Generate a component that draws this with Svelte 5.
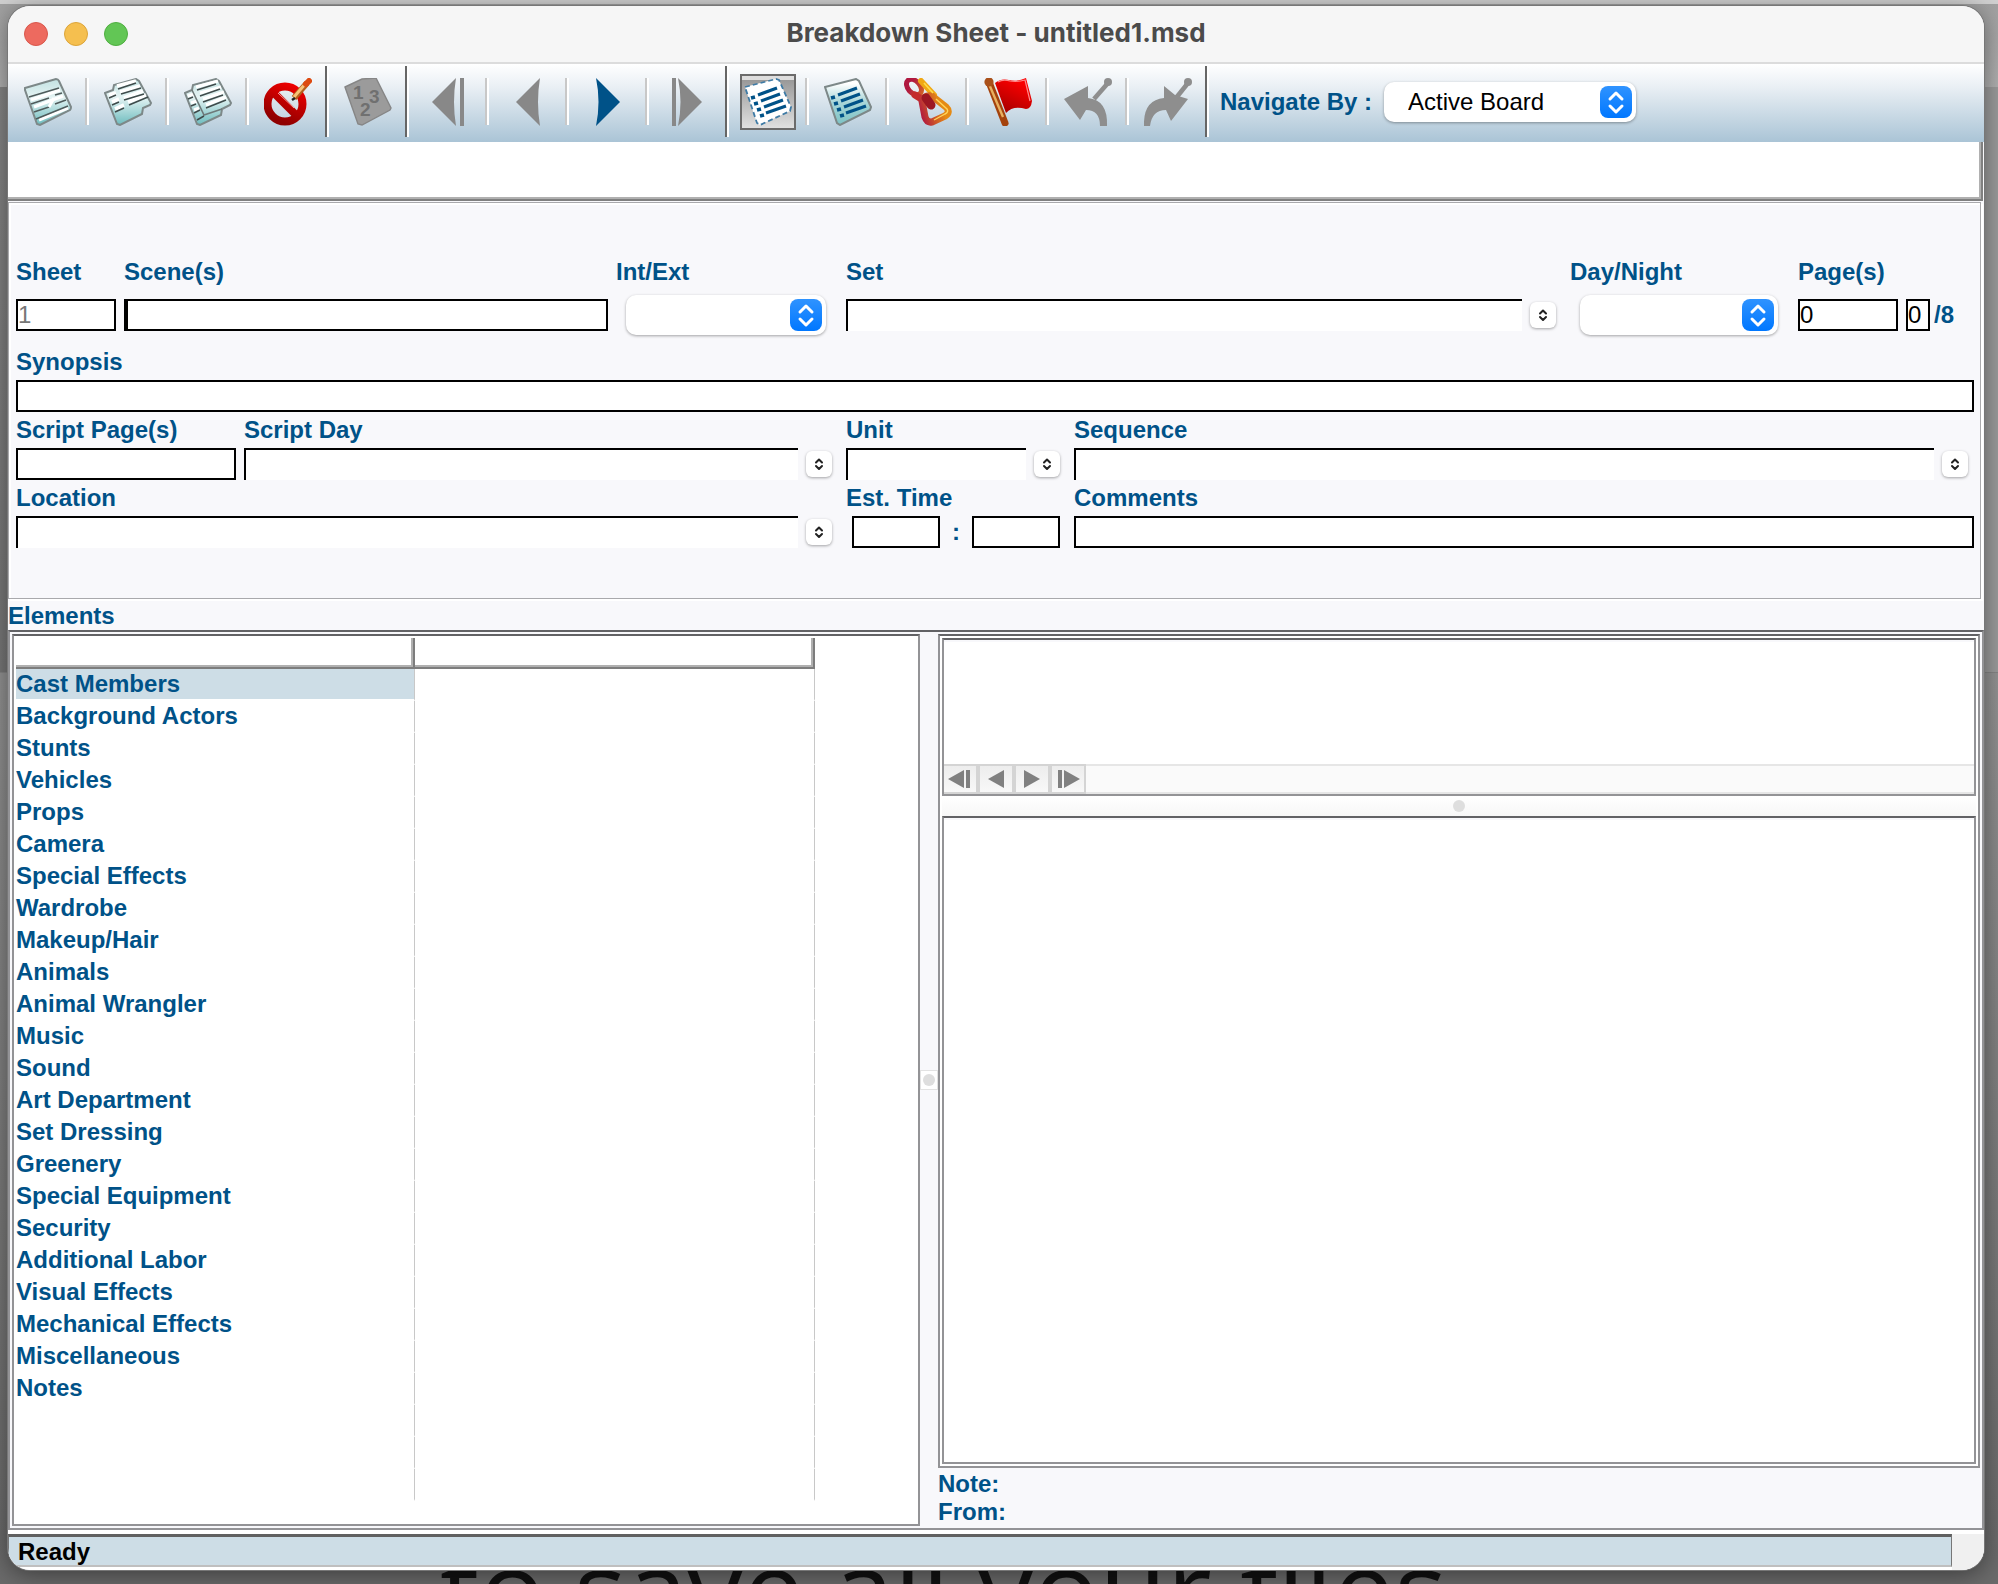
<script lang="ts">
  type Tool = { name: string; label: string; end?: boolean; disabled?: boolean; pressed?: boolean };

  const tools: Tool[] = [
    { name: 'sheet', label: 'New sheet' },
    { name: 'strips', label: 'Split sheet' },
    { name: 'merge', label: 'Merge sheets' },
    { name: 'omit', label: 'Omit sheet', end: true },
    { name: 'renumber', label: 'Renumber', disabled: true, end: true },
    { name: 'first', label: 'First sheet', disabled: true },
    { name: 'prev', label: 'Previous sheet', disabled: true },
    { name: 'next', label: 'Next sheet' },
    { name: 'last', label: 'Last sheet', disabled: true, end: true },
    { name: 'list', label: 'All elements', pressed: true },
    { name: 'used', label: 'Used elements' },
    { name: 'link', label: 'Link elements' },
    { name: 'flag', label: 'Flag sheet' },
    { name: 'undo', label: 'Previous mark', disabled: true },
    { name: 'redo', label: 'Next mark', disabled: true, end: true },
  ];

  const categories = [
    'Cast Members', 'Background Actors', 'Stunts', 'Vehicles', 'Props', 'Camera',
    'Special Effects', 'Wardrobe', 'Makeup/Hair', 'Animals', 'Animal Wrangler', 'Music',
    'Sound', 'Art Department', 'Set Dressing', 'Greenery', 'Special Equipment', 'Security',
    'Additional Labor', 'Visual Effects', 'Mechanical Effects', 'Miscellaneous', 'Notes',
    '', '', '',
  ];

  let selected = $state(0);
  let sheet = $state('1');
  let pages = $state('0');
  let eighths = $state('0');
</script>

{#snippet chevrons()}
  <svg viewBox="0 0 32 32" aria-hidden="true">
    <path d="M10 13 L16 7 L22 13 M10 20 L16 26 L22 20" />
  </svg>
{/snippet}

{#snippet combo(id: string)}
  <div class="combo">
    <input {id} type="text" />
    <button class="mini" aria-label="Show choices">{@render chevrons()}</button>
  </div>
{/snippet}

{#snippet listLines()}
  <path d="M14 17 L33 10 M17 23 L36 16 M20 29 L39 22 M22 35 L42 28" stroke="#005288" stroke-width="3.2" />
  <path d="M7 20 L11 19 M10 26 L14 25 M13 32 L17 31 M16 38 L20 37" stroke="#005288" stroke-width="3.6" />
{/snippet}

{#snippet icon(name: string)}
  <svg class="icon" viewBox="0 0 48 48" fill="none" aria-hidden="true">
    {#if name === 'sheet'}
      <path d="M1 10 L32 1 Q34 1 35 3 L47 29 Q47 31 46 32 L16 47 L13 46 L1 12 Z" fill="url(#paper)" stroke="#7d8888" stroke-width="2" />
      <path d="M7 22 L36 12 M10 29 L39 18 M15 42 L44 30" stroke="#fff" stroke-width="3" />
      <path d="M5 19 L35 10 M7 26 L25 20 M31 17 L38 15 M10 34 L25 29 M31 26 L42 22 M12 41 L44 28" stroke="#4f5b5b" stroke-width="1.5" />
      <path d="M25 29 L30 20" stroke="#fff" stroke-width="3" />
    {:else if name === 'strips'}
      <path d="M1 15 L9 12 L10 7 L32 1 L35 3 L47 25 L46 27 L39 30 L38 36 L16 47 L13 46 Z" fill="url(#paper)" stroke="#7d8888" stroke-width="2" />
      <path d="M13 8 L32 3 M5 17 L12 15 M16 14 L36 8 M8 24 L15 21 M20 20 L39 13 M11 31 L20 27 M24 24 L42 17" stroke="#fff" stroke-width="3.6" />
      <path d="M14 11 L32 5 M5 20 L12 17 M17 16 L37 10 M8 27 L15 24 M20 22 L40 16 M11 34 L20 30 M25 27 L44 19" stroke="#3f4b4b" stroke-width="1.5" />
    {:else if name === 'merge'}
      <path d="M1 15 L8 12 L9 7 L32 1 L35 3 L47 25 L46 27 L38 31 L37 37 L16 47 L13 46 Z" fill="url(#paper)" stroke="#7d8888" stroke-width="2" />
      <path d="M12 9 L34 3 M16 15 L37 9 M19 21 L40 14 M22 27 L42 19 M4 18 L10 16 M7 25 L13 23 M10 32 L15 30" stroke="#fff" stroke-width="3" />
      <path d="M8 12 L20 37 L38 31" stroke="#6d7979" stroke-width="1.6" />
      <path d="M13 12 L32 6 M16 18 L36 11 M19 24 L39 17 M22 30 L42 22 M4 21 L9 19 M7 28 L12 26 M10 35 L16 32 M13 42 L20 38" stroke="#3f4b4b" stroke-width="1.5" />
    {:else if name === 'omit'}
      <circle cx="21" cy="26" r="17.5" stroke="url(#red)" stroke-width="8" />
      <path d="M9 14 L33 38" stroke="url(#red)" stroke-width="8" />
      <path d="M14 15 L30 30" stroke="#f6a0a0" stroke-width="1" />
      <path d="M30 20 L43 5" stroke="#b5601c" stroke-width="6" />
      <path d="M30 19 L42 5" stroke="#f7c277" stroke-width="3" />
      <path d="M42 6 L45 3" stroke="#dd4a10" stroke-width="6" stroke-linecap="round" />
      <path d="M28 22 L31 20" stroke="#222" stroke-width="2.4" />
    {:else if name === 'renumber'}
      <path d="M1 9 L18 1 L32 0 L47 30 L46 32 L18 47 L14 46 Z" fill="#9b9b9b" stroke="#868686" stroke-width="1.4" />
      <g fill="#707070" font-family="Liberation Sans, Arial, sans-serif" font-size="19" font-weight="700">
        <text x="9" y="21">1</text>
        <text x="25" y="25">3</text>
        <text x="16" y="38">2</text>
      </g>
    {:else if name === 'first'}
      <path d="M8 24 L32 0 Q28 24 32 48 Z" fill="#888" />
      <path d="M36 0 H40 V48 H36 Z" fill="#888" />
    {:else if name === 'prev'}
      <path d="M12 24 L36 0 Q32 24 36 48 Z" fill="#888" />
    {:else if name === 'next'}
      <path d="M36 24 L12 0 Q17 24 12 48 Z" fill="#005288" />
    {:else if name === 'last'}
      <path d="M38 24 L14 0 Q19 24 14 48 Z" fill="#888" />
      <path d="M8 0 H12 V48 H8 Z" fill="#888" />
    {:else if name === 'list'}
      <path d="M1 9 L32 1 L35 2 L47 29 L46 33 L16 47 L13 45 Z" fill="#fff" stroke="#3f7ba5" stroke-width="1.8" stroke-dasharray="5 3" />
      {@render listLines()}
    {:else if name === 'used'}
      <path d="M1 9 L32 1 L35 3 L47 29 L46 32 L16 47 L13 45 Z" fill="url(#paperTeal)" stroke="#7d8888" stroke-width="2" />
      {@render listLines()}
    {:else if name === 'link'}
      <ellipse cx="10" cy="9" rx="9" ry="6" transform="rotate(48 10 9)" stroke="url(#chain)" stroke-width="5" />
      <path d="M17 3 L30 17" stroke="#f0a814" stroke-width="6" stroke-linecap="round" />
      <path d="M11 17 L24 25" stroke="#c42c2c" stroke-width="7" stroke-linecap="round" />
      <path d="M18 23 Q20 17 28 18 L42 29 Q47 34 41 38 L28 44 Q23 45 21 39 Z" stroke="url(#chain)" stroke-width="7" stroke-linejoin="round" />
      <path d="M22 20 L27 27" stroke="#9c1722" stroke-width="9" stroke-linecap="round" />
      <path d="M32 21 L43 31 Q45 34 41 36 L30 42" stroke="#ffd45a" stroke-width="1.4" />
      <path d="M20 5 L29 15" stroke="#ffdc4a" stroke-width="1.6" />
    {:else if name === 'flag'}
      <path d="M11 5 Q17 0 25 2 Q34 4 42 0 L48 23 Q47 31 42 31 Q29 27 22 35 Z" fill="url(#red)" />
      <path d="M14 4 Q19 1 26 3 Q34 4 41 2 L46 23" stroke="#ff8a8a" stroke-width="1.2" />
      <path d="M5 4 L21 45" stroke="#a4420c" stroke-width="7" stroke-linecap="round" />
      <path d="M5 6 L19 39" stroke="#e8b060" stroke-width="2.4" />
      <circle cx="5" cy="4" r="4.6" fill="#a9501a" />
    {:else if name === 'undo'}
      <path d="M0 21 L24 8 V20 Q44 22 43 48 H36 Q36 32 22 32 L16 42 Z" fill="#8e8e8e" />
      <path d="M30 21 L44 5" stroke="#8e8e8e" stroke-width="4.6" />
      <circle cx="44" cy="4" r="4" fill="#8e8e8e" />
    {:else if name === 'redo'}
      <path d="M20 8 L31 17 L44 21 L27 43 L22 32 Q8 32 6 48 H0 Q-1 22 20 20 Z" fill="#8e8e8e" />
      <path d="M32 20 L44 5" stroke="#8e8e8e" stroke-width="4.6" />
      <circle cx="44" cy="4" r="4" fill="#8e8e8e" />
    {/if}
  </svg>
{/snippet}

<svg class="defs" aria-hidden="true">
  <defs>
    <linearGradient id="paper" x1="0" y1="0" x2="0" y2="1">
      <stop offset="0" stop-color="#c3e2e2" />
      <stop offset="0.4" stop-color="#e4f3f3" />
      <stop offset="1" stop-color="#6dbcbe" />
    </linearGradient>
    <linearGradient id="paperTeal" x1="0" y1="0" x2="0" y2="1">
      <stop offset="0.1" stop-color="#fff" />
      <stop offset="0.5" stop-color="#a9d6d8" />
      <stop offset="1" stop-color="#7cc2c4" />
    </linearGradient>
    <linearGradient id="red" gradientUnits="userSpaceOnUse" x1="36" y1="4" x2="18" y2="44">
      <stop offset="0" stop-color="#fa0000" />
      <stop offset="1" stop-color="#8f0000" />
    </linearGradient>
    <linearGradient id="chain" gradientUnits="userSpaceOnUse" x1="12" y1="26" x2="34" y2="18">
      <stop offset="0" stop-color="#b01840" />
      <stop offset="1" stop-color="#e58a14" />
    </linearGradient>
  </defs>
</svg>

<div class="desktop">
  <p class="behind">to save all your files</p>

  <main class="window">
    <header class="titlebar">
      <div class="lights">
        <button class="light close" aria-label="Close"></button>
        <button class="light minimise" aria-label="Minimise"></button>
        <button class="light zoom" aria-label="Zoom"></button>
      </div>
      <h1>Breakdown Sheet - untitled1.msd</h1>
    </header>

    <div class="toolbar">
      {#each tools as tool}
        <div class="tool" class:end={tool.end}>
          <button class:pressed={tool.pressed} disabled={tool.disabled} aria-label={tool.label}>
            {@render icon(tool.name)}
          </button>
        </div>
      {/each}
      <label for="navigate">Navigate By :</label>
      <div class="select">
        <select id="navigate"><option>Active Board</option></select>
        <span class="knob">{@render chevrons()}</span>
      </div>
    </div>

    <div class="strip"></div>

    <form class="form" onsubmit={(e) => e.preventDefault()}>
      <div class="row heading">
        <div class="field"><label for="sheet">Sheet</label><div class="control"><input id="sheet" class="dim" type="text" bind:value={sheet} /></div></div>
        <div class="field"><label for="scenes">Scene(s)</label><div class="control"><input id="scenes" class="current" type="text" /></div></div>
        <div class="field">
          <label for="intext">Int/Ext</label>
          <div class="control">
            <div class="select inset">
              <select id="intext"><option></option><option>INT</option><option>EXT</option></select>
              <span class="knob">{@render chevrons()}</span>
            </div>
          </div>
        </div>
        <div class="field"><label for="set">Set</label><div class="control">{@render combo('set')}</div></div>
        <div class="field">
          <label for="daynight">Day/Night</label>
          <div class="control">
            <div class="select inset">
              <select id="daynight"><option></option><option>Day</option><option>Night</option></select>
              <span class="knob">{@render chevrons()}</span>
            </div>
          </div>
        </div>
        <div class="field">
          <label for="pages">Page(s)</label>
          <div class="control pages">
            <input id="pages" type="text" bind:value={pages} />
            <input id="eighths" type="text" bind:value={eighths} />
            <label for="eighths">/8</label>
          </div>
        </div>
      </div>

      <div class="field"><label for="synopsis">Synopsis</label><input id="synopsis" type="text" /></div>

      <div class="row script">
        <div class="field"><label for="scriptpages">Script Page(s)</label><input id="scriptpages" type="text" /></div>
        <div class="field"><label for="scriptday">Script Day</label>{@render combo('scriptday')}</div>
        <div class="field"><label for="unit">Unit</label>{@render combo('unit')}</div>
        <div class="field"><label for="sequence">Sequence</label>{@render combo('sequence')}</div>
      </div>

      <div class="row place">
        <div class="field"><label for="location">Location</label>{@render combo('location')}</div>
        <div class="field">
          <label for="hours">Est. Time</label>
          <div class="time">
            <input id="hours" type="text" /><span>:</span><input type="text" aria-label="Minutes" />
          </div>
        </div>
        <div class="field"><label for="comments">Comments</label><input id="comments" type="text" /></div>
      </div>
    </form>

    <h2>Elements</h2>

    <section class="elements">
      <div class="pane">
        <table>
          <thead>
            <tr><th class="first" aria-label="Category"></th><th aria-label="Element"></th></tr>
          </thead>
          <tbody>
            {#each categories as category, i}
              <tr onclick={() => (selected = i)}>
                <td class:selected={selected === i}>{category}</td>
                <td></td>
              </tr>
            {/each}
          </tbody>
        </table>
      </div>

      <div class="splitter"><span class="grip"><i></i></span></div>

      <div class="side">
        <div class="viewer">
          <div class="preview">
            <div class="page"></div>
            <div class="pager">
              <button aria-label="First"><svg viewBox="0 0 32 26"><path d="M4 13 L20 4 V22 Z M22 4 H26 V22 H22 Z" /></svg></button>
              <button aria-label="Previous"><svg viewBox="0 0 32 26"><path d="M8 13 L24 4 V22 Z" /></svg></button>
              <button aria-label="Next"><svg viewBox="0 0 32 26"><path d="M24 13 L8 4 V22 Z" /></svg></button>
              <button aria-label="Last"><svg viewBox="0 0 32 26"><path d="M28 13 L12 4 V22 Z M6 4 H10 V22 H6 Z" /></svg></button>
            </div>
          </div>
          <div class="divider"><i></i></div>
          <div class="picture"></div>
        </div>
        <p>Note:</p>
        <p>From:</p>
      </div>
    </section>

    <footer>
      <output>Ready</output>
      <span class="corner"></span>
    </footer>
  </main>
</div>

<style>
  :global(body) {
    margin: 0;
  }

  .defs {
    position: absolute;
    width: 0;
    height: 0;
  }

  .desktop {
    position: relative;
    box-sizing: border-box;
    min-height: 100vh;
    padding: 6px 14px 14px 8px;
    overflow: hidden;
    display: flex;
    background:
      linear-gradient(#d0d0d0 0 4px, transparent 4px),
      linear-gradient(90deg, transparent 50%, #9b9b9b 50%) 0 87px / 100% 585px no-repeat,
      linear-gradient(#a0a0a0, #b0b0b0 87px, #858585 87px, #777 672px, #929292 673px, #6a6a6a 1560px);
    font: 24px/28px 'Liberation Sans', Arial, sans-serif;
    color: #005288;
  }

  .behind {
    position: absolute;
    left: 440px;
    top: calc(100% - 27px);
    margin: 0;
    font: 110px/60px 'Open Sans', sans-serif;
    color: #111;
    white-space: nowrap;
  }

  .window {
    position: relative;
    flex: 1;
    display: flex;
    flex-direction: column;
    border-radius: 22px;
    overflow: hidden;
    background: #f8f8fb;
    box-shadow: 0 0 0 1px #777, 0 4px 24px rgba(0, 0, 0, 0.45);
  }

  .titlebar {
    display: grid;
    grid-template-columns: 1fr auto 1fr;
    align-items: center;
    height: 56px;
    background: #f6f6f6;
    border-bottom: 2px solid #dcdcdc;
  }

  .lights {
    display: flex;
    gap: 16px;
    padding-left: 16px;
  }

  .light {
    width: 24px;
    height: 24px;
    padding: 0;
    border: 1px solid #d8574c;
    border-radius: 50%;
    background: #ed6a5f;
  }

  .light.minimise {
    border-color: #dba43a;
    background: #f5bf4f;
  }

  .light.zoom {
    border-color: #4fae40;
    background: #62c655;
  }

  h1 {
    margin: 0;
    padding-bottom: 2px;
    font: 700 26px/32px Inter, sans-serif;
    color: #4b4b4b;
  }

  .toolbar {
    display: flex;
    align-items: center;
    height: 75px;
    padding: 0 0 3px 1px;
    background: linear-gradient(#fff, #e9eff4 30%, #aac4d6);
  }

  .toolbar > label {
    margin: 0 12px 0 11px;
    white-space: nowrap;
  }

  .tool {
    display: flex;
    align-items: center;
    justify-content: space-between;
    width: 69px;
    height: 71px;
    padding-left: 11px;
  }

  .tool::after {
    content: '';
    width: 2px;
    height: 47px;
    background: #c8c8c8;
    border-right: 2px solid #fff;
  }

  .tool.end::after {
    height: 71px;
    background: #666;
  }

  .tool button {
    box-sizing: border-box;
    width: 56px;
    height: 56px;
    padding: 2px;
    border: 2px solid transparent;
    background: none;
  }

  .tool button.pressed {
    border-color: #6b6b6b;
    background: linear-gradient(#ddd 0 4px, #999 4px, #e0e0e0);
  }

  .icon {
    display: block;
    width: 48px;
    height: 48px;
  }

  label,
  h2,
  .side p {
    font-size: 24px;
    line-height: 28px;
    font-weight: 700;
  }

  .select {
    position: relative;
    width: 252px;
  }

  .select.inset {
    width: auto;
    flex: 1;
    margin: 0 12px 0 10px;
  }

  select {
    display: block;
    box-sizing: border-box;
    appearance: none;
    width: 100%;
    height: 40px;
    padding: 0 40px 0 24px;
    border: 0;
    border-radius: 10px;
    background: #fff;
    box-shadow: 0 1px 3px rgba(0, 0, 0, 0.35);
    font: inherit;
    color: #000;
  }

  .knob {
    position: absolute;
    top: 4px;
    right: 4px;
    width: 32px;
    height: 32px;
    border-radius: 8px;
    background: linear-gradient(#2f93ff, #0077ff);
    pointer-events: none;
  }

  .knob svg,
  .mini svg {
    display: block;
    width: 100%;
    height: 100%;
    fill: none;
    stroke: #fff;
    stroke-width: 3;
    stroke-linecap: round;
    stroke-linejoin: round;
  }

  .strip {
    height: 57px;
    margin-right: 1px;
    background: #fff;
    border: solid #808080;
    border-width: 0 2px 2px 0;
    box-shadow: inset -2px -2px #b0b0b0;
  }

  .form {
    display: flex;
    flex-direction: column;
    gap: 4px;
    margin: 1px 3px 0 0;
    padding: 55px 6px 50px 7px;
    border: 1px solid #a9a9ac;
    box-shadow: inset 2px 2px #fff, 2px 2px #fff;
  }

  .row {
    display: grid;
    gap: 8px;
  }

  .heading {
    grid-template-columns: 100px 484fr 222px 716fr 220px 176px;
    margin-bottom: 9px;
  }

  .script {
    grid-template-columns: 220px 594fr 220px 900fr;
  }

  .place {
    grid-template-columns: 822fr 220px 900fr;
  }

  .field {
    display: flex;
    flex-direction: column;
    gap: 4px;
    min-width: 0;
  }

  .heading .field {
    gap: 9px;
  }

  .control {
    display: flex;
    align-items: center;
    height: 40px;
  }

  input {
    box-sizing: border-box;
    width: 100%;
    min-width: 0;
    height: 32px;
    padding: 0;
    border: 2px solid #000;
    border-radius: 0;
    background: #fff;
    font: inherit;
    color: #000;
    outline: none;
  }

  input.dim {
    color: #777;
  }

  input.current {
    border-left-width: 4px;
  }

  .combo {
    display: flex;
    flex: 1;
    align-items: center;
    gap: 8px;
    padding-right: 6px;
  }

  .combo input {
    border-width: 2px 0 0 2px;
  }

  .mini {
    flex: none;
    width: 26px;
    height: 26px;
    padding: 5px;
    border: 0;
    border-radius: 6px;
    background: #fff;
    box-shadow: 0 1px 3px rgba(0, 0, 0, 0.35);
  }

  .mini svg {
    stroke: #222;
    stroke-width: 4;
  }

  .pages #pages {
    width: 100px;
    margin-right: 8px;
  }

  .pages #eighths {
    width: 24px;
    margin-right: 4px;
  }

  .time {
    display: flex;
    justify-content: space-between;
    align-items: center;
    padding: 0 6px;
    font-weight: 700;
  }

  .time input {
    width: 88px;
  }

  h2 {
    margin: 0;
    padding: 3px 0 0;
  }

  .elements {
    flex: 1;
    display: grid;
    grid-template-columns: 908fr 18px 1042fr;
    padding: 2px;
    border: 2px solid #939396;
    border-top-color: #626265;
    background: #f8f8fb;
  }

  .pane {
    padding: 2px;
    border: 2px solid #939396;
    border-top-color: #626265;
    background: #fff;
  }

  table {
    width: 799px;
    table-layout: fixed;
    border-collapse: separate;
    border-spacing: 0;
  }

  th {
    box-sizing: border-box;
    height: 31px;
    padding: 0;
    border: solid #7d7d7d;
    border-width: 0 2px 2px 0;
    box-shadow: inset -2px -2px #b0b0b0;
  }

  th.first {
    width: 399px;
  }

  td {
    box-sizing: border-box;
    height: 32px;
    padding: 0;
    line-height: 30px;
    font-weight: 700;
    border-right: 1px solid #c8c8c8;
    border-bottom: 2px solid #fff;
  }

  td.selected {
    background: #cddde6;
  }

  .splitter {
    display: flex;
    align-items: center;
  }

  .grip {
    display: grid;
    place-items: center;
    width: 16px;
    height: 18px;
    border: 1px solid #e2e2e2;
    background: #fff;
  }

  i {
    width: 12px;
    height: 12px;
    border-radius: 50%;
    background: #dedede;
  }

  .side {
    display: flex;
    flex-direction: column;
  }

  .side p {
    margin: 0;
  }

  .viewer {
    flex: 1;
    display: flex;
    flex-direction: column;
    margin-bottom: 2px;
    padding: 2px;
    border: 2px solid #939396;
    border-top-color: #626265;
    background: #fff;
  }

  .preview,
  .picture {
    border: 2px solid #939396;
    border-top-color: #626265;
    background: #fff;
    box-shadow: inset 0 2px #f8f8fb;
  }

  .page {
    height: 124px;
  }

  .pager {
    display: flex;
    height: 26px;
    border: solid #e6e6e6;
    border-width: 2px 0;
    background: #fafafa;
  }

  .pager button {
    width: 36px;
    margin: -2px 0;
    padding: 0;
    border: solid #d4d4d4;
    border-width: 2px 4px 2px 0;
    background: linear-gradient(#ededed, #f8f8f8);
  }

  .pager button:last-of-type {
    width: 34px;
    border-right-width: 2px;
  }

  .pager svg {
    display: block;
    width: 32px;
    height: 26px;
    fill: #808080;
  }

  .divider {
    display: grid;
    place-items: center;
    height: 20px;
    background: linear-gradient(#fff, #f7f7f7);
  }

  .picture {
    flex: 1;
  }

  footer {
    display: flex;
    height: 33px;
    padding: 4px 0 3px;
    background: #fff;
  }

  output {
    box-sizing: border-box;
    flex: 1;
    height: 33px;
    padding: 0 9px;
    border: 1px solid #777;
    border-top: 3px solid #606060;
    border-bottom: 2px solid #bfbfbf;
    background: #cddde6;
    font-weight: 700;
    line-height: 30px;
    color: #000;
  }

  .corner {
    width: 32px;
    margin-bottom: -3px;
    background: #f0f0f0;
  }
</style>
